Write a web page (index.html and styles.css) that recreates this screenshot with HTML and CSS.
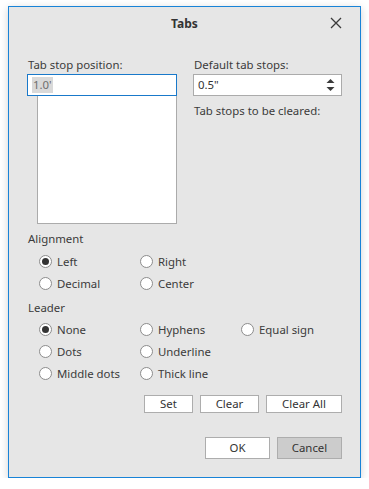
FILE: index.html
```html
<!DOCTYPE html>
<html lang="en">
<head>
  <meta charset="UTF-8">
  <title>Tabs</title>
  <link rel="stylesheet" href="styles.css">
</head>
<body>
  <div class="dialog">
    <div class="dialog__header">
      <span class="dialog__title">Tabs</span>
      <span class="dialog__close">
        <svg width="12" height="12" viewBox="0 0 12 12"><path d="M1 1 L11 11 M11 1 L1 11" stroke="#3a3a3a" stroke-width="1.3" fill="none"/></svg>
      </span>
    </div>
    <div class="dialog__body">
      <div class="columns">
        <div class="col">
          <div class="label">Tab stop position:</div>
          <div class="input input--focus"><span class="sel">1.0'</span></div>
          <div class="listbox"></div>
        </div>
        <div class="col">
          <div class="label">Default tab stops:</div>
          <div class="input spin">
            <span>0.5"</span>
            <span class="spin__arrows">
              <svg width="9" height="14" viewBox="0 0 9 14"><path d="M4.5 1 L8.5 5 L0.5 5 Z M0.5 9 L8.5 9 L4.5 13 Z" fill="#3a3a3a"/></svg>
            </span>
          </div>
          <div class="label label--gap">Tab stops to be cleared:</div>
        </div>
      </div>

      <div class="group-title group-title--first">Alignment</div>
      <div class="radios">
        <label class="radio checked"><i></i>Left</label>
        <label class="radio"><i></i>Right</label>
        <span></span>
        <label class="radio"><i></i>Decimal</label>
        <label class="radio"><i></i>Center</label>
        <span></span>
      </div>

      <div class="group-title">Leader</div>
      <div class="radios">
        <label class="radio checked"><i></i>None</label>
        <label class="radio"><i></i>Hyphens</label>
        <label class="radio"><i></i>Equal sign</label>
        <label class="radio"><i></i>Dots</label>
        <label class="radio"><i></i>Underline</label>
        <span></span>
        <label class="radio"><i></i>Middle dots</label>
        <label class="radio"><i></i>Thick line</label>
        <span></span>
      </div>

      <div class="actions">
        <button class="btn btn--small" style="width:49px">Set</button>
        <button class="btn btn--small" style="width:59px">Clear</button>
        <button class="btn btn--small" style="width:76px">Clear All</button>
      </div>

      <div class="footer">
        <button class="btn">OK</button>
        <button class="btn btn--pressed">Cancel</button>
      </div>
    </div>
  </div>
</body>
</html>
```

FILE: styles.css
```css
* { box-sizing: border-box; }
body {
  margin: 0;
  padding: 6px 0 0 8px;
  background: #fff;
  font-family: 'Noto Sans', 'Open Sans', sans-serif;
  font-size: 11.4px;
  color: #3b3b3b;
}
.dialog {
  width: 353px;
  height: 472px;
  background: #e6e6e6;
  border: 1px solid #1883d7;
  box-shadow: 0 2px 8px rgba(0, 0, 0, 0.18);
  display: flex;
  flex-direction: column;
}
.dialog__header {
  height: 32px;
  display: flex;
  align-items: center;
  justify-content: center;
  position: relative;
}
.dialog__title {
  font-weight: bold;
  font-size: 12px;
  color: #333;
}
.dialog__close {
  position: absolute;
  right: 18px;
  top: 10px;
  display: flex;
}
.dialog__body {
  padding: 18px 18px 0 18px;
  display: flex;
  flex-direction: column;
}
.columns {
  display: flex;
  gap: 16px;
}
.col {
  width: 150px;
  display: flex;
  flex-direction: column;
}
.label {
  line-height: 16px;
  height: 16px;
  margin-left: 1px;
  margin-bottom: 1px;
  white-space: nowrap;
}
.label--gap { margin-top: 7px; }
.input {
  height: 22px;
  background: #fff;
  border: 1px solid #ababab;
  display: flex;
  align-items: center;
  padding-left: 4px;
  line-height: 16px;
}
.input--focus {
  border-color: #1979ca;
}
.sel {
  background: #d9d9d9;
  color: #6e6e6e;
  padding: 0 1px;
}
.spin {
  justify-content: space-between;
  padding-right: 6px;
  color: #333;
}
.spin__arrows { display: flex; }
.listbox {
  margin-left: 10px;
  width: 140px;
  height: 128px;
  background: #fff;
  border: 1px solid #ababab;
  border-top: none;
}
.group-title {
  line-height: 16px;
  height: 16px;
  margin: 6px 0 2px 1px;
}
.group-title--first { margin-top: 7px; margin-bottom: 3px; }
.radios {
  display: grid;
  grid-template-columns: 101px 101px 1fr;
  grid-auto-rows: 22px;
  padding-left: 12px;
}
.radio {
  display: flex;
  align-items: center;
  gap: 5px;
  white-space: nowrap;
}
.radio i {
  width: 13px;
  height: 13px;
  border-radius: 50%;
  border: 1px solid #8c8c8c;
  background: #fff;
  display: flex;
  align-items: center;
  justify-content: center;
}
.radio.checked i::after {
  content: '';
  width: 7px;
  height: 7px;
  border-radius: 50%;
  background: #333;
}
.actions {
  display: flex;
  justify-content: flex-end;
  gap: 7px;
  margin-top: 11px;
}
.footer {
  display: flex;
  justify-content: flex-end;
  gap: 7px;
  margin-top: 24px;
}
.btn {
  font: inherit;
  color: #333;
  background: #fff;
  border: 1px solid #adadad;
  width: 65px;
  height: 22px;
  padding: 0;
  line-height: 16px;
}
.btn--small { height: 18px; line-height: 14px; }
.btn--pressed { background: #cccccc; }
```
